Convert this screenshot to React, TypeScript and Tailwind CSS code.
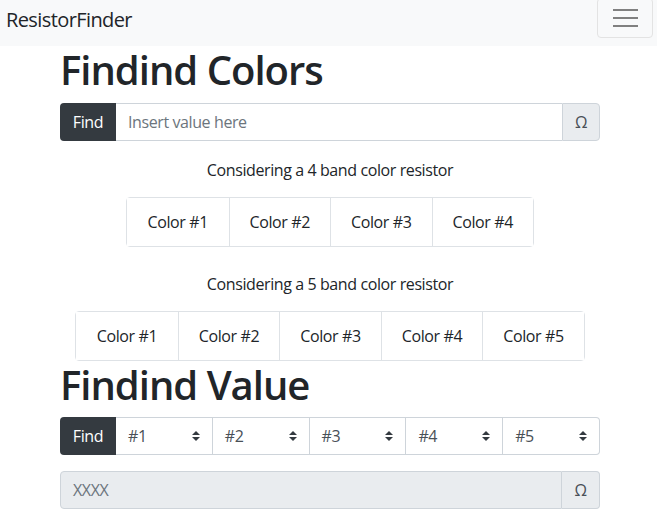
import React from 'react';

const font = { fontFamily: '"Open Sans", "Noto Sans", sans-serif' };

function Arrows() {
  return (
    <svg width="8" height="10" viewBox="0 0 4 5" className="absolute right-[12px] top-1/2 -translate-y-1/2">
      <path fill="#343a40" d="M2 0L0 2h4zm0 5L0 3h4z" />
    </svg>
  );
}

function ColorGroup({ count }: { count: number }) {
  const items = Array.from({ length: count }, (_, i) => `Color #${i + 1}`);
  return (
    <div className="flex justify-center">
      <div className="flex border border-[#dee2e6] rounded-[4px]">
        {items.map((label, i) => (
          <button
            key={label}
            className={`w-[101.5px] h-[48px] text-[16px] tracking-[-0.4px] text-[#212529] bg-white ${i > 0 ? 'border-l border-[#dee2e6]' : ''}`}
          >
            {label}
          </button>
        ))}
      </div>
    </div>
  );
}

export default function App() {
  return (
    <div className="min-h-[522px] bg-white text-[#212529] tracking-[-0.4px]" style={font}>
      {/* Navbar */}
      <nav className="h-[46px] bg-[#f8f9fa] flex justify-between items-start pl-[6px] pr-[4px]">
        <span className="text-[20px] leading-[30px] pt-[5px] tracking-[-0.6px]">ResistorFinder</span>
        <button className="w-[56px] h-[40px] -mt-[2px] border border-[#e3e3e3] rounded-[4px] flex flex-col items-center justify-center gap-[6px]">
          <span className="block w-[25px] h-[2px] bg-[#808080]" />
          <span className="block w-[25px] h-[2px] bg-[#808080]" />
          <span className="block w-[25px] h-[2px] bg-[#808080]" />
        </button>
      </nav>

      <div className="w-[540px] ml-[60px]">
        <h1 className="text-[40px] leading-[48px] font-semibold tracking-[-1px] mb-[9px]">Findind Colors</h1>

        <div className="flex h-[38px] mb-[17px] text-[16px]">
          <button className="w-[56px] bg-[#343a40] text-white rounded-l-[4px]">Find</button>
          <input
            className="flex-1 border-y border-[#ced4da] px-[12px] outline-none tracking-[-0.4px] placeholder:text-[#6c757d]"
            placeholder="Insert value here"
          />
          <span className="w-[38px] flex items-center justify-center bg-[#e9ecef] border border-[#ced4da] rounded-r-[4px] text-[#495057]">
            Ω
          </span>
        </div>

        <p className="text-center text-[16px] leading-[24px] mb-[15px]">Considering a 4 band color resistor</p>
        <ColorGroup count={4} />

        <p className="text-center text-[16px] leading-[24px] mt-[25px] mb-[15px]">Considering a 5 band color resistor</p>
        <ColorGroup count={5} />

        <h1 className="text-[40px] leading-[48px] font-semibold tracking-[-1px] mb-[8px]">Findind Value</h1>

        <div className="flex h-[38px] mb-[16px] text-[16px]">
          <button className="w-[56px] bg-[#343a40] text-white rounded-l-[4px]">Find</button>
          {['#1', '#2', '#3', '#4', '#5'].map((v, i) => (
            <div
              key={v}
              className={`relative flex-1 flex items-center pl-[12px] bg-white border-y border-r border-[#ced4da] text-[#495057] ${i === 4 ? 'rounded-r-[4px]' : ''}`}
            >
              {v}
              <Arrows />
            </div>
          ))}
        </div>

        <div className="flex h-[38px] text-[16px]">
          <div className="flex-1 flex items-center px-[12px] bg-[#e9ecef] border border-[#ced4da] rounded-l-[4px] text-[#6c757d]">
            XXXX
          </div>
          <span className="w-[38px] flex items-center justify-center bg-[#e9ecef] border-y border-r border-[#ced4da] rounded-r-[4px] text-[#495057]">
            Ω
          </span>
        </div>
      </div>
    </div>
  );
}
